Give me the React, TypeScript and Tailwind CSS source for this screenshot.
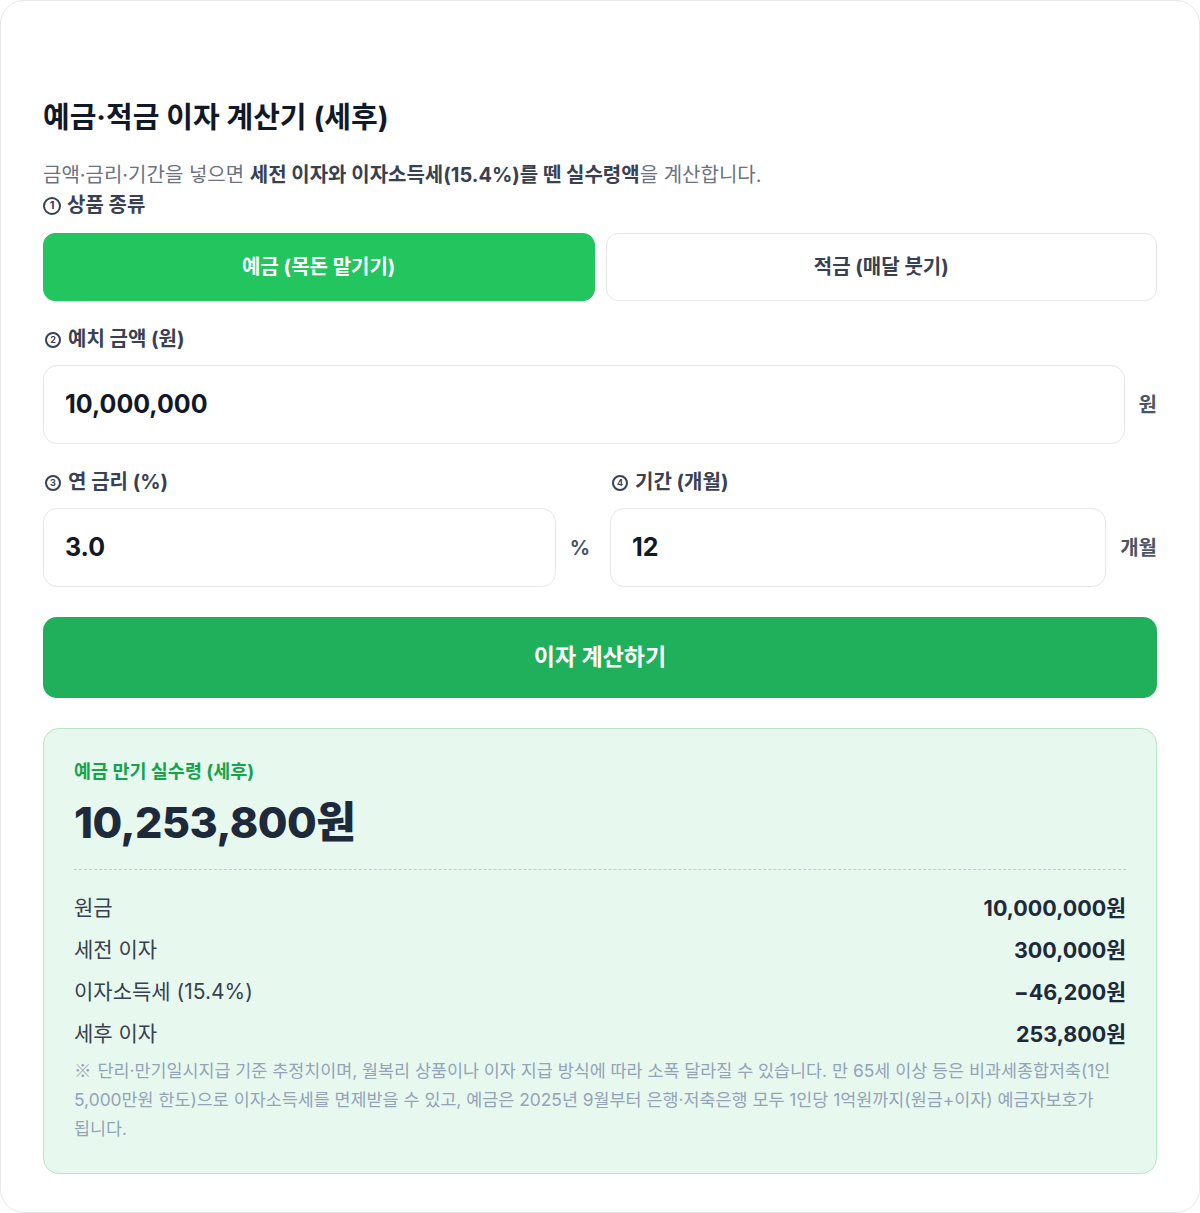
import { useState } from 'react'

const font = "font-['Inter','Noto_Sans_CJK_KR',sans-serif]"

type Row = { label: string; value: string }

const rows: Row[] = [
  { label: '원금', value: '10,000,000원' },
  { label: '세전 이자', value: '300,000원' },
  { label: '이자소득세 (15.4%)', value: '−46,200원' },
  { label: '세후 이자', value: '253,800원' },
]

function Step({ n, big }: { n: number; big?: boolean }) {
  return (
    <span
      className={`inline-flex shrink-0 items-center justify-center rounded-full border-[2px] border-current font-bold leading-none ${
        big ? 'mr-[6px] size-[18px] text-[11px]' : 'ml-[2px] mr-[7px] size-[16px] text-[9px]'
      }`}
    >
      {n}
    </span>
  )
}

function FieldLabel({ n, big, children }: { n: number; big?: boolean; children: React.ReactNode }) {
  return (
    <div className="flex items-center text-[20px] leading-[27px] font-bold text-[#374151]">
      <Step n={n} big={big} />
      {children}
    </div>
  )
}

function NumberInput({ value, suffix }: { value: string; suffix: string }) {
  return (
    <div className="flex items-center gap-[14px]">
      <div className="flex h-[79px] min-w-0 flex-1 items-center rounded-[14px] border border-[#e5e7eb] bg-white px-[21px]">
        <span className="text-[25px] font-bold text-[#111827]">{value}</span>
      </div>
      <span className="shrink-0 text-[20px] font-bold text-[#4b5563]">{suffix}</span>
    </div>
  )
}

export default function App() {
  const [kind, setKind] = useState<'deposit' | 'savings'>('deposit')

  return (
    <div className={`${font} min-h-screen bg-white`}>
      <div className="h-[1213px] rounded-[24px] border border-[#e5e7eb] bg-white px-[42px] pt-[98px]">
        <h1 className="text-[29px] leading-[37px] font-bold text-[#111827]">예금·적금 이자 계산기 (세후)</h1>
        <p className="mt-[26px] text-[20px] leading-[27px] text-[#6b7280]">
          금액·금리·기간을 넣으면{' '}
          <b className="font-bold text-[#374151]">세전 이자와 이자소득세(15.4%)를 뗀 실수령액</b>을 계산합니다.
        </p>

        <div className="mt-[3px]">
          <FieldLabel n={1} big>
            상품 종류
          </FieldLabel>
        </div>
        <div className="mt-[14px] grid grid-cols-2 gap-[11px]">
          <button
            type="button"
            onClick={() => setKind('deposit')}
            className={`h-[68px] rounded-[12px] border text-[20px] font-bold ${
              kind === 'deposit'
                ? 'border-[#22c55e] bg-[#22c55e] text-white'
                : 'border-[#e5e7eb] bg-white text-[#374151]'
            }`}
          >
            예금 (목돈 맡기기)
          </button>
          <button
            type="button"
            onClick={() => setKind('savings')}
            className={`h-[68px] rounded-[12px] border text-[20px] font-bold ${
              kind === 'savings'
                ? 'border-[#22c55e] bg-[#22c55e] text-white'
                : 'border-[#e5e7eb] bg-white text-[#374151]'
            }`}
          >
            적금 (매달 붓기)
          </button>
        </div>

        <div className="mt-[25px]">
          <FieldLabel n={2}>예치 금액 (원)</FieldLabel>
        </div>
        <div className="mt-[12px]">
          <NumberInput value="10,000,000" suffix="원" />
        </div>

        <div className="mt-[25px] grid grid-cols-2 gap-[20px]">
          <div>
            <FieldLabel n={3}>연 금리 (%)</FieldLabel>
            <div className="mt-[12px]">
              <NumberInput value="3.0" suffix="%" />
            </div>
          </div>
          <div>
            <FieldLabel n={4}>기간 (개월)</FieldLabel>
            <div className="mt-[12px]">
              <NumberInput value="12" suffix="개월" />
            </div>
          </div>
        </div>

        <button
          type="button"
          className="mt-[30px] h-[81px] w-full rounded-[14px] bg-[#20b05c] text-[23px] font-bold text-white"
        >
          이자 계산하기
        </button>

        <div className="mt-[30px] rounded-[16px] border border-[#b5e6c6] bg-[#e7f8ee] px-[30px] pt-[30px] pb-[30px]">
          <div className="text-[18.5px] leading-[24px] font-bold text-[#16a34a]">예금 만기 실수령 (세후)</div>
          <div className="mt-[13px] text-[43px] leading-[52px] font-extrabold tracking-[-0.5px] text-[#1e293b]">
            10,253,800원
          </div>
          <div className="mt-[21px] border-t border-dashed border-[#a7dcbb]" />
          <div className="mt-[23px] flex flex-col gap-[12px]">
            {rows.map((row) => (
              <div key={row.label} className="flex items-center justify-between leading-[30px]">
                <span className="text-[21px] text-[#374151]">{row.label}</span>
                <span className="text-[21.5px] font-bold text-[#1e293b]">{row.value}</span>
              </div>
            ))}
          </div>
          <p className="mt-[6px] break-keep text-[17.4px] leading-[29px] text-[#94a3b8]">
            <span className="mr-[6px] inline-block font-['Noto_Sans_CJK_KR',sans-serif] leading-[29px]">※</span>단리·만기일시지급
            기준 추정치이며, 월복리 상품이나 이자 지급 방식에 따라 소폭 달라질 수 있습니다. 만 65세 이상 등은
            비과세종합저축(1인 5,000만원 한도)으로 이자소득세를 면제받을 수 있고, 예금은 2025년 9월부터 은행·저축은행 모두
            1인당 1억원까지(원금+이자) 예금자보호가 됩니다.
          </p>
        </div>
      </div>
    </div>
  )
}
